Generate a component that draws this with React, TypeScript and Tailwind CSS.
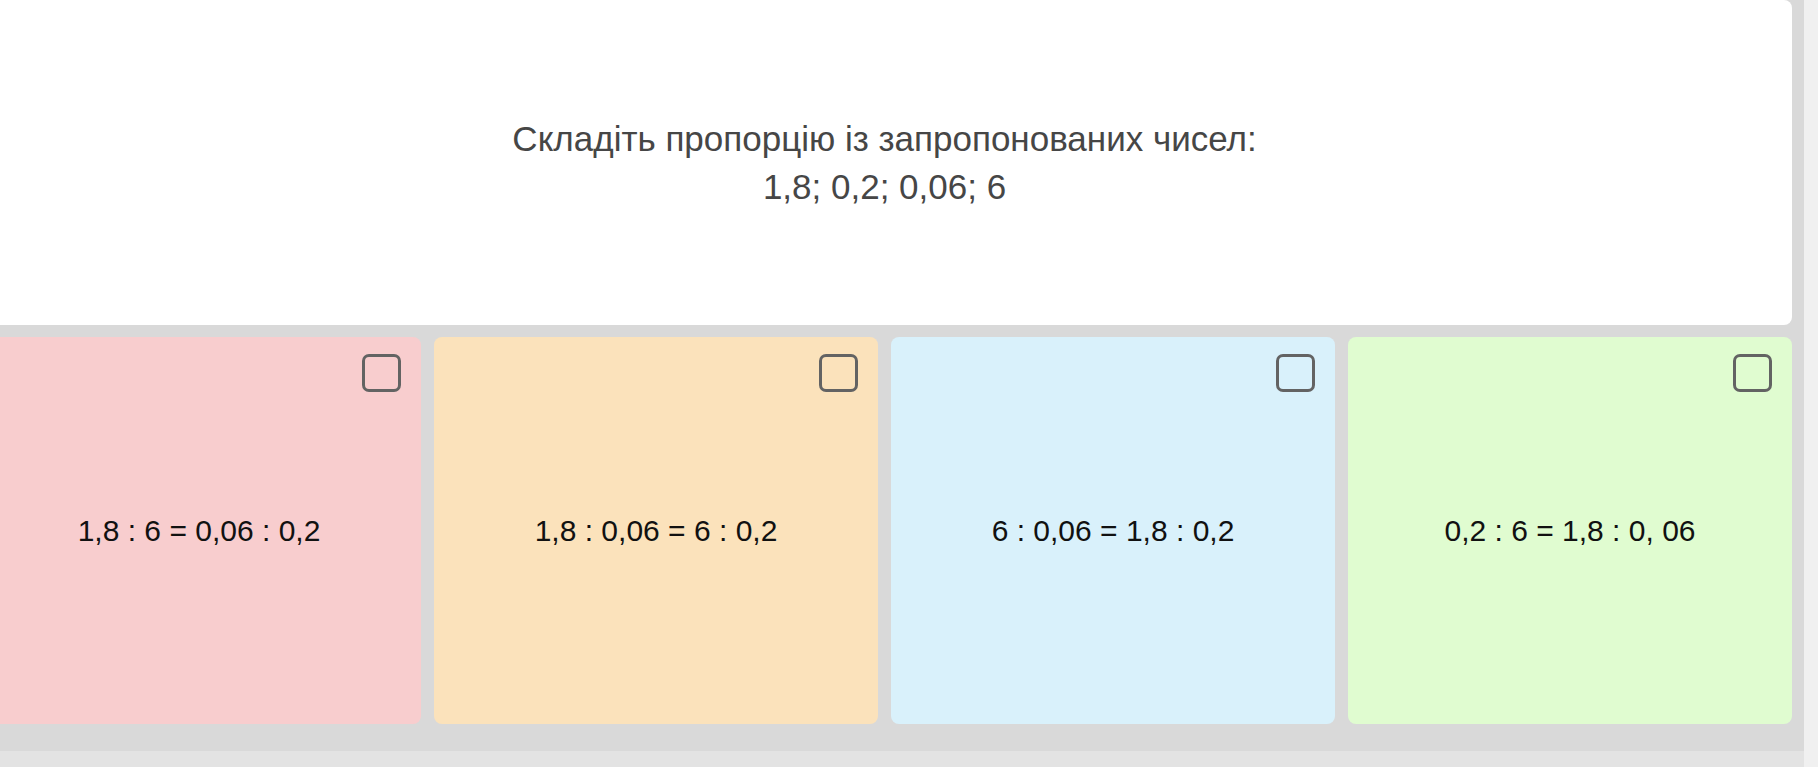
import React from "react";

const cards = [
  { text: "1,8 : 6 = 0,06 : 0,2", bg: "bg-[#f8cdce]" },
  { text: "1,8 : 0,06 = 6 : 0,2", bg: "bg-[#fbe2bb]" },
  { text: "6 : 0,06 = 1,8 : 0,2", bg: "bg-[#d9f1fb]" },
  { text: "0,2 : 6 = 1,8 : 0, 06", bg: "bg-[#e0fcd0]" },
];

export default function App() {
  return (
    <div
      className="w-[1818px] h-[767px] overflow-hidden flex bg-[#e3e3e3]"
      style={{ fontFamily: '"Liberation Sans", Arial, sans-serif' }}
    >
      <div className="w-[1804px] h-[767px] overflow-hidden shrink-0">
        <div className="ml-[-35px] w-[1839px] h-[751px] bg-[#d9d9d9] pl-[12px] pr-[12px] flex flex-col">
          <div className="h-[325px] bg-white rounded-b-[8px] rounded-tr-[8px] flex items-center justify-center text-center text-[35px] leading-[1.36] text-[#464646]">
            <div>
              <div>Складіть пропорцію із запропонованих чисел:</div>
              <div>1,8; 0,2; 0,06; 6</div>
            </div>
          </div>
          <div className="mt-[12px] h-[387px] grid grid-cols-4 gap-[13px]">
            {cards.map((c, i) => (
              <div
                key={i}
                className={`relative rounded-[8px] ${c.bg} flex items-center justify-center text-[30px] text-[#111111]`}
              >
                <div className="absolute top-[17px] right-[20px] w-[39px] h-[38px] border-[3px] border-[#636363] rounded-[7px]" />
                <span>{c.text}</span>
              </div>
            ))}
          </div>
        </div>
      </div>
      <div className="w-[14px] h-[767px] bg-[#f0f0f0] shrink-0" />
    </div>
  );
}
